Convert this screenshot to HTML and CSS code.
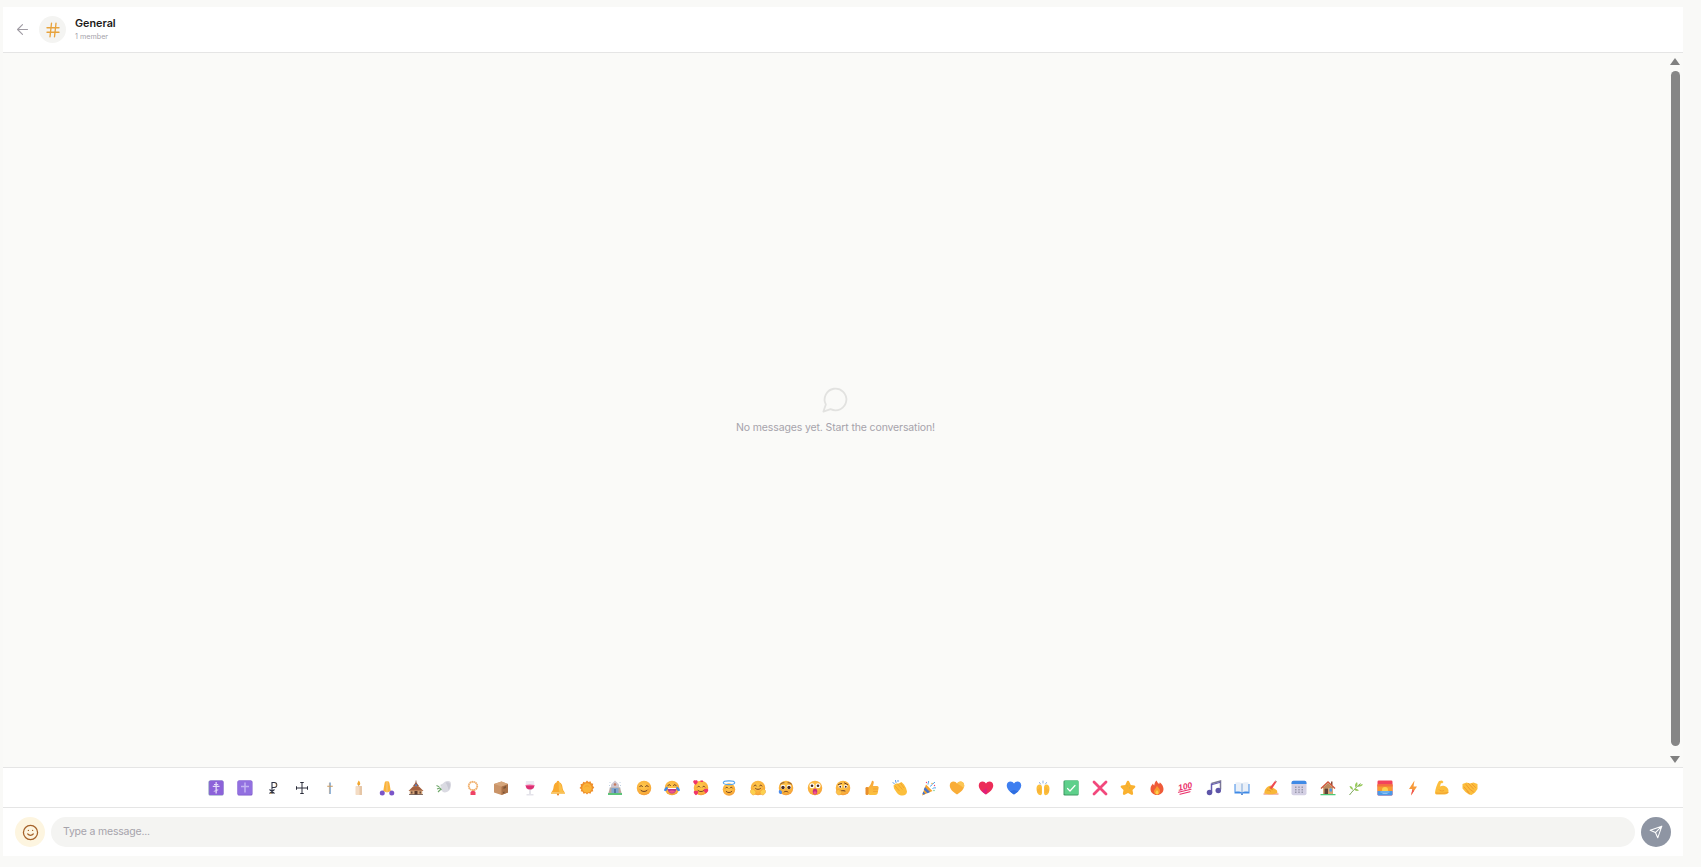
FILE: index.html
```html
<!DOCTYPE html>
<html lang="en">
<head>
<meta charset="utf-8">
<title>General</title>
<link rel="stylesheet" href="styles.css">
</head>
<body>
<svg class="defs" width="0" height="0" aria-hidden="true">
  <defs>
    <radialGradient id="skin" cx="0.45" cy="0.35" r="0.75"><stop offset="0" stop-color="#ffc94d"/><stop offset="0.7" stop-color="#f9ad3a"/><stop offset="1" stop-color="#ef8f3a"/></radialGradient>
    <linearGradient id="gold" x1="0" y1="0" x2="0" y2="1"><stop offset="0" stop-color="#f7a43a"/><stop offset="1" stop-color="#fcc23f"/></linearGradient>
    <symbol id="face" viewBox="0 0 32 32"><circle cx="16" cy="16" r="14.5" fill="url(#skin)"/></symbol>
    <symbol id="e1" viewBox="0 0 32 32"><rect x="1" y="1" width="30" height="30" rx="3" fill="#7d8fb5"/><rect x="2.5" y="1" width="28.5" height="29" rx="3" fill="#8c62d9"/><path d="M15 4h2.6v23H15zM9.5 11.5h13.600v2.400H9.500zM12 8h8.500v1.800H12zM11.500 21.800l9-3.200v1.900l-9 3.200z" fill="#e3dbf8"/></symbol>
    <symbol id="e2" viewBox="0 0 32 32"><rect x="1" y="1" width="30" height="30" rx="3" fill="#7a55c8"/><rect x="1" y="1" width="29" height="28.500" rx="3" fill="#9270e0"/><path d="M14.500 5h3v20h-3zM8 11.500h16v3H8z" fill="#c4b3f2"/></symbol>
    <symbol id="e3" viewBox="0 0 32 32"><path d="M14 4v24M14 5h4.500a5 5 0 0 1 0 10H14M9 19l10 8M19 19 9 27" fill="none" stroke="#2c3042" stroke-width="2.200"/><path d="M20 6.500a4 4 0 0 1 1 7" fill="none" stroke="#d99a4a" stroke-width="1.200"/><path d="M10 26.500h3" stroke="#e8a33d" stroke-width="1.500"/></symbol>
    <symbol id="e4" viewBox="0 0 32 32"><path d="M16 5v22M5 16h22M12.500 5h7M12.500 27h7M5 12.500v7M27 12.500v7" fill="none" stroke="#2a2c3a" stroke-width="2"/></symbol>
    <symbol id="e5" viewBox="0 0 32 32"><path d="M16 5v23" stroke="#4d83bd" stroke-width="2.400"/><path d="M10.500 12.500h11" stroke="#c99a5e" stroke-width="2"/><path d="M14.600 6v21" stroke="#e0a865" stroke-width=".8"/></symbol>
    <symbol id="e6" viewBox="0 0 32 32"><rect x="9" y="12" width="13" height="18" rx="1.500" fill="#f4dcc4"/><rect x="17" y="12" width="5" height="18" rx="1" fill="#e6c6a6"/><path d="M15.500 1c2.500 3 3 5 3 6.500a3 3 0 0 1-6 0C12.500 6 14 4 15.500 1z" fill="#f5a82e"/><path d="M15.300 9.500v3" stroke="#8a6a50" stroke-width="1"/></symbol>
    <symbol id="e7" viewBox="0 0 32 32"><path d="M15.500 2c-3 0-4 2-4.500 5L8.500 22l7 3zM16.500 2c3 0 4 2 4.500 5l2.500 15-7 3z" fill="#fbb43a"/><circle cx="6.500" cy="26" r="5" fill="#7a55c8"/><circle cx="25.500" cy="26" r="5" fill="#7a55c8"/><path d="M16 4v20" stroke="#ea9a2f" stroke-width=".8"/></symbol>
    <symbol id="e8" viewBox="0 0 32 32"><path d="M15.200 1h1.600v5h-1.600z" fill="#8a5a44"/><path d="M16 4l6 8H10z" fill="#9a5b42"/><path d="M11 12h10v8H11z" fill="#b87f5a"/><circle cx="16" cy="10.500" r="2" fill="#4f83d1"/><path d="M10 13L1 22h30l-9-9z" fill="#a4603f"/><rect x="3.500" y="21" width="25" height="8" fill="#d0a177"/><rect x="13" y="22" width="6" height="7" fill="#5c3a2c"/><rect x="6" y="23" width="3" height="4" fill="#6b4a3a"/><rect x="23" y="23" width="3" height="4" fill="#6b4a3a"/><rect x="2" y="28.500" width="28" height="1.500" fill="#5f4b45"/></symbol>
    <symbol id="e9" viewBox="0 0 32 32"><path d="M9 9c3 0 5-2 8-5 4-3 10-2 12 0 2 4 1 12-2 16-3 4-9 6-13 4-3-2-4-6-5-9z" fill="#dadae2"/><path d="M19 5c4-1 7 0 9 2 1 5 0 10-3 13-1-6-3-11-6-15z" fill="#c9c9d4"/><path d="M1 11l6 3 4-2M2 18l6-2 3 4M4 24l5-5" fill="none" stroke="#6fa86a" stroke-width="2.200"/><circle cx="9" cy="13" r="2.400" fill="#f0f0f4"/></symbol>
    <symbol id="e10" viewBox="0 0 32 32"><circle cx="16" cy="12" r="8.500" fill="none" stroke="#f0ae6a" stroke-width="3.600" stroke-dasharray="3.200 .8"/><path d="M12 11c1-3 4-4 6-3" fill="none" stroke="#fff" stroke-width="1"/><path d="M16 20l5 4v6H11v-6z" fill="#ef4265"/><rect x="14.500" y="19" width="3" height="3" fill="#f0ae6a"/></symbol>
    <symbol id="e11" viewBox="0 0 32 32"><path d="M2 8l15-5 13 5v17l-13 5-15-5z" fill="#ca9468"/><path d="M17 13l13-5v17l-13 5z" fill="#a97148"/><path d="M21 14l5-2v4l-5 2zM20 24l3-1v3l-3 1z" fill="#7b5538"/><path d="M2 8l15 5 13-5-13-5z" fill="#d6a67c"/></symbol>
    <symbol id="e12" viewBox="0 0 32 32"><path d="M8 2h16l1 9c0 6-4 9-9 9s-9-3-9-9z" fill="#eceaf2"/><path d="M7.500 10h17c.5 6-3.500 9-8.500 9s-9-3-8.500-9z" fill="#dc2f73"/><path d="M7.500 10c4-1.500 12-1.500 17 0v2c-5-1-12-1-17 0z" fill="#f26aa0"/><path d="M15 20h2v8h-2z" fill="#c9c7d4"/><path d="M9 29h14v1.500H9z" fill="#c9c7d4"/></symbol>
    <symbol id="e13" viewBox="0 0 32 32"><path d="M16 1.500a2.500 2.500 0 0 1 2.500 3C23 6 24.500 10 25 15c.5 4 2 7 4.500 10h-27C5 22 6.500 19 7 15c.5-5 2-9 6.500-10.500A2.500 2.500 0 0 1 16 1.500z" fill="#f9a92f"/><path d="M17 5c4 1 6 5 6.500 10 .5 4 2 7 4.500 10h-9c-2-6-1-14-2-20z" fill="#fbc04a"/><path d="M2 25h28v2.500H2z" fill="#f7b93f"/><circle cx="16" cy="29" r="2.200" fill="#ec8a2a"/></symbol>
    <symbol id="e14" viewBox="0 0 32 32"><path d="M16 1l3 3 4-1.500 1.500 4 4 1-1 4 3 3.500-3 3.500 1 4-4 1-1.500 4-4-1.500-3 3-3-3-4 1.500-1.500-4-4-1 1-4L1 16l3-3.500-1-4 4-1 1.500-4 4 1.500z" fill="#ef8f2b"/><circle cx="16" cy="16" r="9.500" fill="#fbb53a"/><path d="M11 14c2-3 8-3 10 0" fill="none" stroke="#f6a22e" stroke-width="2"/></symbol>
    <symbol id="e15" viewBox="0 0 32 32"><path d="M16 1l8 8v7H8V9z" fill="#cfc6cf"/><circle cx="16" cy="9" r="2.500" fill="#c77a5c"/><path d="M5 4l2 2M27 4l-2 2M4 11h2M26 11h2M7 15l-2 1M25 15l2 1" stroke="#a9c0d8" stroke-width="1.500"/><path d="M6 15h20l3 11H3z" fill="#b8a99f"/><rect x="9" y="16" width="14" height="10" fill="#7fa5cf"/><rect x="14" y="18" width="4" height="8" fill="#55779f"/><rect x="2" y="26" width="28" height="4" fill="#5cc479"/></symbol>
    <symbol id="e16" viewBox="0 0 32 32"><use href="#face" width="32" height="32"/><path d="M7.500 13c1-2.500 4.500-2.500 5.500 0M19 13c1-2.500 4.500-2.500 5.500 0M9 20c3 4 11 4 14 0" fill="none" stroke="#5a2f1f" stroke-width="1.700" stroke-linecap="round"/></symbol>
    <symbol id="e17" viewBox="0 0 32 32"><use href="#face" width="32" height="32"/><path d="M8 11c1-2.500 4-2.500 5 0M19 11c1-2.500 4-2.500 5 0" fill="none" stroke="#5a2f1f" stroke-width="1.700" stroke-linecap="round"/><path d="M7 16h18c0 7-4 11-9 11s-9-4-9-11z" fill="#b83a8e"/><path d="M10 23c3-3 9-3 12 0-3 3.500-9 3.500-12 0z" fill="#f2558d"/><path d="M8 16h16v2H8z" fill="#fff"/><path d="M0 20c1-4 4-6 7-7 1 4 0 8-3 9-2 0-4 0-4-2zM32 20c-1-4-4-6-7-7-1 4 0 8 3 9 2 0 4 0 4-2z" fill="#3f8ae6"/></symbol>
    <symbol id="e18" viewBox="0 0 32 32"><use href="#face" width="32" height="32"/><path d="M9 14c1-2 4-2 5 0M19 14c1-2 4-2 5 0M10 21c3 3 9 3 12 0" fill="none" stroke="#5a2f1f" stroke-width="1.600" stroke-linecap="round"/><path d="M5 1C7-.5 10 1 9.500 4 9 6.500 7 8 5 9.500 3 8 1 6.500.5 4 0 1 3-.5 5 1z" fill="#f0356a"/><path d="M26 18c2-1.500 5 0 4.500 3-.5 2.500-2.500 4-4.500 5.500-2-1.500-4-3-4.500-5.500-.5-3 2.500-4.500 4.500-3z" fill="#f0356a"/><path d="M6 22c2-1.500 5 0 4.500 3-.5 2.500-2.500 4-4.500 5.500-2-1.500-4-3-4.500-5.500-.5-3 2.500-4.500 4.500-3z" fill="#f0356a"/><path d="M15 1h5v3h-5z" fill="#f0356a"/></symbol>
    <symbol id="e19" viewBox="0 0 32 32"><circle cx="16" cy="19" r="12.500" fill="url(#skin)"/><ellipse cx="16" cy="5.500" rx="11.500" ry="3.800" fill="none" stroke="#52a4f0" stroke-width="2.200"/><path d="M9 16c1-2 4-2 5 0M18 16c1-2 4-2 5 0M10.500 23c3 3 8 3 11 0" fill="none" stroke="#5a2f1f" stroke-width="1.600" stroke-linecap="round"/></symbol>
    <symbol id="e20" viewBox="0 0 32 32"><use href="#face" width="32" height="32"/><path d="M8 12c1-2.500 4-2.500 5 0M19 12c1-2.500 4-2.500 5 0M11 17c3 2.500 7 2.500 10 0" fill="none" stroke="#5a2f1f" stroke-width="1.600" stroke-linecap="round"/><path d="M1 21l3-3 3 1 3 2 2 3-1 4-4 2-3-1-3-4zM31 21l-3-3-3 1-3 2-2 3 1 4 4 2 3-1 3-4z" fill="#fcd04e" stroke="#ee9e2e" stroke-width="1"/></symbol>
    <symbol id="e21" viewBox="0 0 32 32"><use href="#face" width="32" height="32"/><circle cx="10" cy="14" r="4.600" fill="#fff"/><circle cx="22" cy="14" r="4.600" fill="#fff"/><circle cx="10" cy="15" r="3.400" fill="#4a2b22"/><circle cx="22" cy="15" r="3.400" fill="#4a2b22"/><path d="M5 8c2-2 4-2.500 7-2.500M27 8c-2-2-4-2.500-7-2.500M12 24c2-2 6-2 8 0" fill="none" stroke="#5a2f1f" stroke-width="1.600" stroke-linecap="round"/><path d="M3 20c3 0 5 2 5 5s-3 4-5 2-2-5 0-7z" fill="#4c8df0"/></symbol>
    <symbol id="e22" viewBox="0 0 32 32"><use href="#face" width="32" height="32"/><circle cx="10" cy="11.500" r="5" fill="#fff"/><circle cx="22" cy="11.500" r="5" fill="#fff"/><circle cx="10" cy="11.500" r="2.600" fill="#4a2b22"/><circle cx="22" cy="11.500" r="2.600" fill="#4a2b22"/><ellipse cx="16" cy="23" rx="4.500" ry="6" fill="#c42e7e"/><ellipse cx="16" cy="25.500" rx="3.200" ry="3.200" fill="#f4538e"/></symbol>
    <symbol id="e23" viewBox="0 0 32 32"><use href="#face" width="32" height="32"/><path d="M7 9l6-2M19 6l6 3M12 22c2-1 5-1 8 0" fill="none" stroke="#5a2f1f" stroke-width="1.800" stroke-linecap="round"/><circle cx="10.500" cy="13" r="3.400" fill="#fff"/><circle cx="21.500" cy="13" r="3.400" fill="#fff"/><circle cx="10.500" cy="13.500" r="1.900" fill="#4a2b22"/><circle cx="21.500" cy="13.500" r="1.900" fill="#4a2b22"/><path d="M2 24c1-3 3-5 5-5l3-1 1 2-2 2h3c2 1 2 4 0 6-3 3-8 3-10-4z" fill="#fcc34a" stroke="#e8902e" stroke-width=".8"/></symbol>
    <symbol id="e24" viewBox="0 0 32 32"><path d="M16 1.500c2-.5 4 1 3.500 4L18 12h8c3 0 4 3 3 5l-1.500 9c-.5 2.500-2.500 4-5 4H13c-2 0-4-1-5-2V15c4-3 6-7 8-13.500z" fill="url(#gold)"/><rect x="3" y="14" width="6" height="16" rx="2.500" fill="#e88e2b"/><path d="M18 18h10M18 23h9" stroke="#ea9a2f" stroke-width="1.200"/></symbol>
    <symbol id="e25" viewBox="0 0 32 32"><path d="M3 11l5-4 5 0 6-3 5 5 4 7 2 7c0 5-4 8-9 8-4 0-8-1-11-5l-6-9z" fill="#fcbf3c"/><path d="M6 12l9 10M11 8l10 11M17 6l7 10" fill="none" stroke="#ef9a2f" stroke-width="1.500"/><path d="M2 5l3 3M7 1l1 4M12 0l0 3" stroke="#3f8ae6" stroke-width="1.800" stroke-linecap="round"/></symbol>
    <symbol id="e26" viewBox="0 0 32 32"><path d="M10 9l13 13L2 31z" fill="#f5a32e"/><path d="M8 14l10 10-5 2.500-7.500-7.500zM4.500 23l4.500 4.500L5 29.500 3 27.500z" fill="#4573c9"/><path d="M14 9c0-3 2-4 1-7M19 13c2-5 7-6 9-9M23 17c2-1 5-2 7-1" fill="none" stroke="#3f9fe8" stroke-width="1.900"/><circle cx="11" cy="5" r="1.400" fill="#ef3f7a"/><circle cx="22" cy="7" r="1.300" fill="#f5a32e"/><circle cx="27" cy="11" r="1.400" fill="#ef3f7a"/><circle cx="26" cy="21" r="1.300" fill="#5cc479"/></symbol>
    <path id="heart" d="M16 29C8 24 1.500 18 1.500 11 1.500 6 5 3 9 3c3 0 5.500 1.500 7 4 1.500-2.500 4-4 7-4 4 0 7.500 3 7.500 8 0 7-6.500 13-14.500 18z"/>
    <symbol id="e27" viewBox="0 0 32 32"><use href="#heart" fill="#f9ad38"/><path d="M16 7c1.500-2.500 4-4 7-4 4 0 7.500 3 7.500 8 0 2-.5 3.500-1.500 5-3-4-9-6-13-9z" fill="#fcc655"/></symbol>
    <symbol id="e28" viewBox="0 0 32 32"><use href="#heart" fill="#ec2c58"/><path d="M16 29c-3-2-6-4-8.500-6.500C11 21 17 18 16 14c2 4 3 8 0 15z" fill="#e01f7d"/></symbol>
    <symbol id="e29" viewBox="0 0 32 32"><use href="#heart" fill="#3f7ff0"/><path d="M16 29c-3-2-6-4-8.500-6.500 3 0 5.500-2.500 8.500-2.500s6 2.500 8.500 2.500C22 25 19 27 16 29z" fill="#2f6ee0"/></symbol>
    <symbol id="e30" viewBox="0 0 32 32"><path d="M3 17c0-5 3-8 6-8 3 0 5 2 5 6v11c0 3-2 5-5 4-4-1-6-7-6-13zM29 17c0-5-3-8-6-8-3 0-5 2-5 6v11c0 3 2 5 5 4 4-1 6-7 6-13z" fill="#fcbf3c"/><path d="M6 18v7M10 15v11M26 18v7M22 15v11" stroke="#ef9a2f" stroke-width="1.100"/><path d="M9 5l2 3M16 2v4M23 5l-2 3" stroke="#7a9fd8" stroke-width="1.700" stroke-linecap="round"/></symbol>
    <symbol id="e31" viewBox="0 0 32 32"><rect x="1" y="1" width="30" height="30" rx="2.500" fill="#3e9a62"/><rect x="3" y="1" width="28" height="28" rx="2.500" fill="#5ed08b"/><path d="M9 17l5 5 10-11" fill="none" stroke="#fff" stroke-width="2.400" stroke-linecap="round" stroke-linejoin="round"/></symbol>
    <symbol id="e32" viewBox="0 0 32 32"><path d="M4 4l24 24M28 4L4 28" stroke="#f2487c" stroke-width="5.600" stroke-linecap="round"/></symbol>
    <symbol id="e33" viewBox="0 0 32 32"><path d="M16 1.500c1 0 2 .5 2.500 2l3 6.500 7 1c2 .3 3 2.500 1.500 4l-5 5 1.200 7c.3 2-1.700 3.500-3.500 2.500L16 26l-6.700 3.500c-1.800 1-3.800-.5-3.500-2.500L7 20l-5-5c-1.500-1.500-.5-3.700 1.500-4l7-1 3-6.500c.5-1.500 1.500-2 2.500-2z" fill="#fab12f"/><path d="M13.500 11.500l1.500.5M18 15.500l1.500.5" stroke="#8aa86a" stroke-width="1.300"/></symbol>
    <symbol id="e34" viewBox="0 0 32 32"><path d="M15 1c2 4 3 5 5 7 1-1 1.500-2 1.500-3.500C26 8 29 13 29 18c0 7-6 12-13 12S3 25 3 18c0-6 3-8 5-11 .5 2 1 3 2.500 4C11 7 12 3.500 15 1z" fill="#ef5a38"/><path d="M16 11c1 3 3 4 5 7 1.500 2.500 1 5 .5 6.500-1 3-3 4.500-5.500 4.500s-5.500-2-6-5.500c-.5-3 1.500-4.500 3-6.500 1.500-2 2.500-3.500 3-6z" fill="#f99a2e"/><path d="M16 20c1.500 2 3 3 3 5.500S17.500 29 16 29s-3-1.500-3-3.500 2-3 3-5.500z" fill="#fdd04f"/></symbol>
    <symbol id="e35" viewBox="0 0 32 32"><text class="hundred" x="17" y="19" text-anchor="middle" transform="rotate(-12 16 16)">100</text><path d="M3 24.500l25-6M6 28.500l20-5" stroke="#ea2f6a" stroke-width="2.400" stroke-linecap="round"/></symbol>
    <symbol id="e36" viewBox="0 0 32 32"><path d="M11 7l18-5v17" fill="none" stroke="#7d7a96" stroke-width="3"/><path d="M11 7v18" stroke="#655db0" stroke-width="3"/><path d="M11 9.500l18-5" stroke="#655db0" stroke-width="2.500"/><circle cx="7" cy="25" r="5.500" fill="#5e55a8"/><circle cx="24.500" cy="21" r="5.500" fill="#5e55a8"/></symbol>
    <symbol id="e37" viewBox="0 0 32 32"><path d="M1 8h30v19H1z" fill="#3f8ae6"/><path d="M3 5c5-1 10-.5 12.500 1.500V25C13 23 8 22.500 3 23.500zM29 5c-5-1-10-.5-12.500 1.500V25c2.500-2 7.500-2.500 12.500-1.500z" fill="#eaf0f8"/><path d="M16 6v19" stroke="#9fb4cc" stroke-width="1.200"/><path d="M14 27h4v2.500h-4z" fill="#2f6ec9"/></symbol>
    <symbol id="e38" viewBox="0 0 32 32"><path d="M1 26c6-2 24-3 30 0v4H1z" fill="#f4bcb0"/><path d="M3 27c-1-5 2-11 7-14l5-2 6 5 6 4c2 2 2 5 0 7-6 2-17 2-24 0z" fill="#f9b738"/><path d="M13 16L24 2l3 2-10 15z" fill="#ef4a4f"/><path d="M8 20c3 0 6 1 8 3M12 15c3 1 6 3 8 5" fill="none" stroke="#dd8628" stroke-width="1.400"/><path d="M25 1.500l2.500 2" stroke="#7d6a60" stroke-width="1.500"/></symbol>
    <symbol id="e39" viewBox="0 0 32 32"><rect x="1" y="1.500" width="30" height="29" rx="4" fill="#d4d0e4"/><path d="M1 8V5.500a4 4 0 0 1 4-4h22a4 4 0 0 1 4 4V8z" fill="#3f8ae6"/><path d="M8 13h3v3H8zM14.500 13h3v3h-3zM21 13h3v3h-3zM8 18h3v3H8zM14.500 18h3v3h-3zM21 18h3v3h-3zM8 23h3v3H8zM14.500 23h3v3h-3zM21 23h3v3h-3z" fill="#9a99ac"/></symbol>
    <symbol id="e40" viewBox="0 0 32 32"><rect x="22" y="3" width="3" height="7" fill="#8a4b38"/><path d="M6 14h20v14H6z" fill="#d8a676"/><path d="M16 2L1 16l2 2L16 6l13 12 2-2z" fill="#d2553b"/><path d="M16 6L5 16h22z" fill="#bd8a5e"/><rect x="9" y="17" width="7" height="11" fill="#5d4335"/><rect x="19" y="17" width="5" height="6" fill="#4a9ae8"/><rect x="1" y="28" width="30" height="2.500" fill="#4dcb78"/></symbol>
    <symbol id="e41" viewBox="0 0 32 32"><path d="M3 30C9 22 15 16 25 7" fill="none" stroke="#6a9a45" stroke-width="1.800"/><path d="M15 15c-2-4-1-8 3-11 2 4 1 8-3 11zM19 13c3-4 7-5 11-4-3 4-7 5-11 4zM10 20c-4-2-6-4-7-8 4 0 7 3 7 8zM12 18c4-1 7 0 10 3-4 2-8 1-10-3z" fill="#97c95a"/></symbol>
    <symbol id="e42" viewBox="0 0 32 32"><rect x="1" y="1" width="30" height="30" rx="2.500" fill="#f2425c"/><path d="M1 9h30v13H1z" fill="#f79a32"/><path d="M1 9h30v4H1z" fill="#f5703f"/><circle cx="16" cy="20" r="6" fill="#fdd04f"/><path d="M1 22h30v6.500A2.500 2.500 0 0 1 28.500 31h-25A2.500 2.500 0 0 1 1 28.500z" fill="#4a9ae8"/><path d="M7 24h18M11 27h10" stroke="#bfe0fa" stroke-width="1.200"/></symbol>
    <symbol id="e43" viewBox="0 0 32 32"><path d="M19 1L8 18h7l-3 13 12-18h-7z" fill="#f79a3a"/><path d="M15 18l-3 13 6-9z" fill="#ef4f55"/></symbol>
    <symbol id="e44" viewBox="0 0 32 32"><path d="M10 2l6-1 3 3-3 3-2-1-2 7c3-2 6-2 9-1 5 2 8 5 8 10s-3 7-8 7H5c-2 0-3-2-3-4 1-8 4-17 8-23z" fill="#fcbe3c"/><path d="M10 19c2 3 6 4 10 2M4 26c7 1 16 1 25-1" fill="none" stroke="#ec962d" stroke-width="1.500"/></symbol>
    <symbol id="e45" viewBox="0 0 32 32"><path d="M1 8l8-3 7 2 7-2 8 3 0 10-5 7-7 5-5-1-7-5-6-7z" fill="#fcbe3c"/><path d="M8 9l9 11M13 7l10 11M4 14l9 10M10 23l5 4M18 20l5 4M20 8l7 7" stroke="#ec8f2d" stroke-width="1.600" stroke-linecap="round"/></symbol>
  </defs>
</svg>
<main class="panel">
  <header class="head">
    <button class="back" aria-label="Back"><svg width="17" height="17" viewBox="0 0 24 24" fill="none" stroke="currentColor" stroke-width="1.600" stroke-linecap="round" stroke-linejoin="round"><path d="M19 12H5M12 19l-7-7 7-7"/></svg></button>
    <div class="avatar"><svg width="18" height="18" viewBox="0 0 24 24" fill="none" stroke="currentColor" stroke-width="1.800" stroke-linecap="round"><path d="M4 9h16M4 15h16M10 3 8 21M16 3l-2 18"/></svg></div>
    <div class="titles"><div class="name">General</div><div class="members">1 member</div></div>
  </header>
  <section class="messages">
    <svg class="bubble" width="29" height="29" viewBox="0 0 24 24" fill="none" stroke="currentColor" stroke-width="1.500" stroke-linecap="round" stroke-linejoin="round"><path d="M7.900 20A9 9 0 1 0 4 16.100L2 22Z"/></svg>
    <p class="empty">No messages yet. Start the conversation!</p>
    <div class="bar"><span class="up"></span><span class="thumb"></span><span class="down"></span></div>
  </section>
  <div class="emoji-row">
    <svg class="em"><use href="#e1"/></svg><svg class="em"><use href="#e2"/></svg><svg class="em"><use href="#e3"/></svg><svg class="em"><use href="#e4"/></svg><svg class="em"><use href="#e5"/></svg><svg class="em"><use href="#e6"/></svg><svg class="em"><use href="#e7"/></svg><svg class="em"><use href="#e8"/></svg><svg class="em"><use href="#e9"/></svg><svg class="em"><use href="#e10"/></svg><svg class="em"><use href="#e11"/></svg><svg class="em"><use href="#e12"/></svg><svg class="em"><use href="#e13"/></svg><svg class="em"><use href="#e14"/></svg><svg class="em"><use href="#e15"/></svg><svg class="em"><use href="#e16"/></svg><svg class="em"><use href="#e17"/></svg><svg class="em"><use href="#e18"/></svg><svg class="em"><use href="#e19"/></svg><svg class="em"><use href="#e20"/></svg><svg class="em"><use href="#e21"/></svg><svg class="em"><use href="#e22"/></svg><svg class="em"><use href="#e23"/></svg><svg class="em"><use href="#e24"/></svg><svg class="em"><use href="#e25"/></svg><svg class="em"><use href="#e26"/></svg><svg class="em"><use href="#e27"/></svg><svg class="em"><use href="#e28"/></svg><svg class="em"><use href="#e29"/></svg><svg class="em"><use href="#e30"/></svg><svg class="em"><use href="#e31"/></svg><svg class="em"><use href="#e32"/></svg><svg class="em"><use href="#e33"/></svg><svg class="em"><use href="#e34"/></svg><svg class="em"><use href="#e35"/></svg><svg class="em"><use href="#e36"/></svg><svg class="em"><use href="#e37"/></svg><svg class="em"><use href="#e38"/></svg><svg class="em"><use href="#e39"/></svg><svg class="em"><use href="#e40"/></svg><svg class="em"><use href="#e41"/></svg><svg class="em"><use href="#e42"/></svg><svg class="em"><use href="#e43"/></svg><svg class="em"><use href="#e44"/></svg><svg class="em"><use href="#e45"/></svg>
  </div>
  <footer class="composer">
    <button class="smile" aria-label="Emoji"><svg width="17" height="17" viewBox="0 0 24 24" fill="none" stroke="currentColor" stroke-width="1.800" stroke-linecap="round"><circle cx="12" cy="12" r="10"/><path d="M8 14s1.500 2 4 2 4-2 4-2M9 9h.01M15 9h.01"/></svg></button>
    <div class="input">Type a message...</div>
    <button class="send" aria-label="Send"><svg width="14" height="14" viewBox="0 0 24 24" fill="none" stroke="currentColor" stroke-width="1.800" stroke-linecap="round" stroke-linejoin="round"><path d="m22 2-7 20-4-9-9-4ZM22 2 11 13"/></svg></button>
  </footer>
</main>
</body>
</html>
```
FILE: styles.css
```css
* { box-sizing: border-box; }
html, body { height: 100%; }
body { margin: 0; background: #f9f9f7; font-family: Inter, "Liberation Sans", sans-serif; padding: 7px 18px 0 3px; overflow: hidden; }
.defs { position: absolute; }
.panel { height: 849px; background: #fff; display: flex; flex-direction: column; }
button { border: 0; padding: 0; display: flex; align-items: center; justify-content: center; background: none; }
.head { height: 46px; flex: none; display: flex; align-items: center; border-bottom: 1px solid #e5e5e5; padding-left: 10px; }
.back { width: 18px; height: 18px; color: #a09ca4; margin-right: 8px; }
.avatar { width: 27px; height: 27px; border-radius: 50%; background: #f4f4f2; color: #e8a33d; display: flex; align-items: center; justify-content: center; margin-right: 9px; }
.titles { padding-bottom: 1px; }
.name { font-size: 10.8px; font-weight: 600; line-height: 14px; color: #1c1917; }
.members { font-size: 7.2px; line-height: 10px; margin-top: 1px; color: #a6a3ab; }
.messages { flex: 1; background: #fafaf8; position: relative; display: flex; flex-direction: column; align-items: center; justify-content: center; color: #a6a3ab; padding-right: 15px; }
.bubble { color: #e2e2e0; }
.empty { margin: 7px 0 0; font-size: 10.5px; line-height: 14px; letter-spacing: -0.13px; }
.bar { position: absolute; right: 3px; top: 0; bottom: 0; width: 10px; display: flex; flex-direction: column; align-items: center; }
.up { margin-top: 5px; border: 5px solid transparent; border-top: 0; border-bottom: 7px solid #808080; }
.thumb { flex: 1; width: 9px; margin: 6px 0 10px; background: #868686; border-radius: 5px; }
.down { margin-bottom: 4px; border: 5px solid transparent; border-bottom: 0; border-top: 7px solid #808080; }
.emoji-row { height: 41px; flex: none; display: flex; justify-content: center; align-items: center; gap: 12.5px; border-top: 1px solid #e5e5e5; border-bottom: 1px solid #e5e5e5; }
.em { width: 16px; height: 16px; flex: none; }
.hundred { font-family: "Liberation Sans", sans-serif; font-size: 17px; font-weight: 700; font-style: italic; fill: #ea2f6a; }
.composer { height: 48px; flex: none; display: flex; align-items: center; gap: 6px; padding: 0 12px; }
.smile { width: 30px; height: 30px; border-radius: 50%; background: #fdf5e0; color: #a5622a; flex: none; }
.input { flex: 1; height: 30px; border-radius: 15px; background: #f4f4f2; color: #a6a3ab; font-size: 10.5px; line-height: 30px; padding-left: 12px; letter-spacing: -0.2px; }
.send { width: 30px; height: 30px; border-radius: 50%; background: #8e95a3; color: #fff; flex: none; }
```
